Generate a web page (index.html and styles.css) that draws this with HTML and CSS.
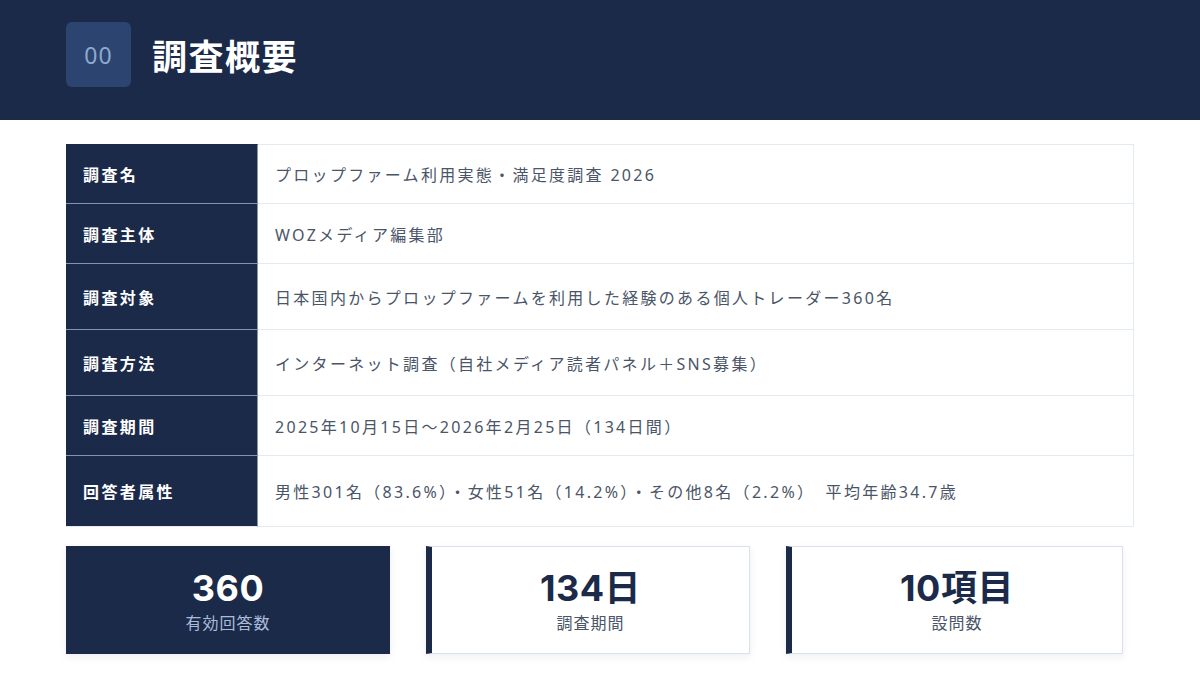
FILE: index.html
```html
<!DOCTYPE html>
<html lang="ja">
<head>
<meta charset="utf-8">
<link rel="stylesheet" href="styles.css">
</head>
<body>
<header class="header">
  <div class="badge">00</div>
  <h1 class="title">調査概要</h1>
</header>
<main class="main">
  <div class="table">
    <div class="label r1 first">調査名</div>
    <div class="value r1 first">プロップファーム利用実態・満足度調査 2026</div>
    <div class="label r2">調査主体</div>
    <div class="value r2">WOZメディア編集部</div>
    <div class="label r3">調査対象</div>
    <div class="value r3">日本国内からプロップファームを利用した経験のある個人トレーダー360名</div>
    <div class="label r4">調査方法</div>
    <div class="value r4">インターネット調査（自社メディア読者パネル＋SNS募集）</div>
    <div class="label r5">調査期間</div>
    <div class="value r5">2025年10月15日〜2026年2月25日（134日間）</div>
    <div class="label r6">回答者属性</div>
    <div class="value r6">男性301名（83.6%）・女性51名（14.2%）・その他8名（2.2%）　平均年齢34.7歳</div>
  </div>
  <div class="cards">
    <div class="card card-dark">
      <div class="num">360</div>
      <div class="cap">有効回答数</div>
    </div>
    <div class="card card-light">
      <div class="num">134日</div>
      <div class="cap">調査期間</div>
    </div>
    <div class="card card-light">
      <div class="num">10項目</div>
      <div class="cap">設問数</div>
    </div>
  </div>
</main>
</body>
</html>
```

FILE: styles.css
```css
* { box-sizing: border-box; }
html, body {
  margin: 0;
  padding: 0;
  background: #ffffff;
  width: 1200px;
  height: 675px;
  overflow: hidden;
  font-family: "Noto Sans", "Noto Sans CJK JP", sans-serif;
}
.header {
  height: 120px;
  background: #1c2a4a;
  display: flex;
  align-items: flex-start;
  padding: 22px 66px 0;
  gap: 21px;
}
.badge {
  width: 65px;
  height: 65px;
  border-radius: 6px;
  background: #2c4570;
  color: #8fa8cf;
  font-size: 23px;
  letter-spacing: 1px;
  font-family: "Noto Sans", "Noto Sans CJK JP", sans-serif;
  display: flex;
  align-items: center;
  justify-content: center;
}
.title {
  margin: 0;
  height: 65px;
  display: flex;
  align-items: center;
  color: #ffffff;
  font-size: 35px;
  font-weight: 700;
  letter-spacing: 1.5px;
}
.main {
  padding: 24px 66px 0;
}
.table {
  display: grid;
  grid-template-columns: 192px 876px;
  grid-template-rows: 60px 60px 66px 66px 60px 71px;
}
.label, .value {
  display: flex;
  align-items: center;
  font-size: 16px;
  white-space: nowrap;
}
.label {
  background: #1c2a4a;
  color: #ffffff;
  font-weight: 700;
  letter-spacing: 2.4px;
  padding-left: 17px;
  border-bottom: 1px solid #8393b0;
  border-right: 1px solid #8393b0;
}
.label.r6 { border-bottom-color: #e5eaf1; }
.value {
  color: #4a5568;
  letter-spacing: 2.3px;
  padding-left: 17px;
  border-bottom: 1px solid #e5eaf1;
  border-right: 1px solid #e5eaf1;
  background: #ffffff;
}
.value.first { border-top: 1px solid #e5eaf1; }
.label.first { border-top: 1px solid #1c2a4a; }
.cards {
  display: grid;
  grid-template-columns: 324px 324px 337px;
  column-gap: 36px;
  margin-top: 19px;
}
.card {
  height: 108px;
  display: flex;
  flex-direction: column;
  align-items: center;
  justify-content: center;
  box-shadow: 0 3px 8px rgba(20, 35, 70, 0.07);
}
.card-dark {
  background: #1c2a4a;
}
.card-light {
  background: #ffffff;
  border: 1px solid #d8e1ec;
  border-left: 6px solid #1c2a4a;
}
.num {
  font-family: "Inter", "Noto Sans CJK JP", sans-serif;
  font-size: 36px;
  font-weight: 700;
  line-height: 40px;
  letter-spacing: 0.5px;
}
.card-dark .num { color: #ffffff; }
.card-light .num { color: #1c2a4a; }
.cap {
  font-size: 16px;
  line-height: 20px;
  letter-spacing: 1px;
  margin-top: 5px;
}
.card-dark .cap { color: #a9bcdb; }
.card-light .cap { color: #4a5568; }
```
